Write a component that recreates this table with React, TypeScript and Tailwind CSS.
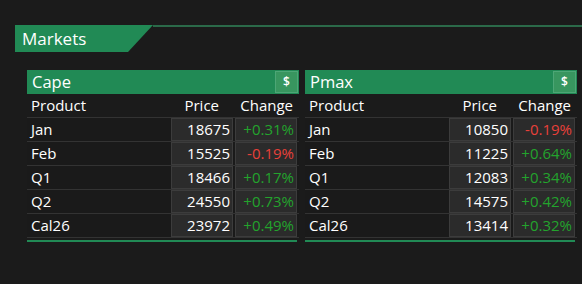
import React from "react";

type Row = { p: string; price: string; ch: string };

const cape: Row[] = [
  { p: "Jan", price: "18675", ch: "+0.31%" },
  { p: "Feb", price: "15525", ch: "-0.19%" },
  { p: "Q1", price: "18466", ch: "+0.17%" },
  { p: "Q2", price: "24550", ch: "+0.73%" },
  { p: "Cal26", price: "23972", ch: "+0.49%" },
];
const pmax: Row[] = [
  { p: "Jan", price: "10850", ch: "-0.19%" },
  { p: "Feb", price: "11225", ch: "+0.64%" },
  { p: "Q1", price: "12083", ch: "+0.34%" },
  { p: "Q2", price: "14575", ch: "+0.42%" },
  { p: "Cal26", price: "13414", ch: "+0.32%" },
];

function Panel({ title, rows }: { title: string; rows: Row[] }) {
  return (
    <div className="w-[272px] flex flex-col">
      <div className="h-[24px] bg-[#218a55] flex items-center justify-between pl-[5px] pr-[1px]">
        <span className="text-[16.5px] text-white leading-none font-medium">{title}</span>
        <div className="w-[23px] h-[22px] bg-[#38965f] border border-[#4da676] flex items-center justify-center text-[12px] text-white font-semibold leading-none">
          $
        </div>
      </div>
      <div className="h-[24px] flex items-center border-b border-[#333333] text-[15px] text-white font-medium">
        <div className="flex-1 pl-[4px]">Product</div>
        <div className="w-[62px] text-right pr-[14px]">Price</div>
        <div className="w-[62px] ml-[2px] mr-[2px] text-right pr-[4px]">Change</div>
      </div>
      {rows.map((r) => (
        <div key={r.p} className="h-[24px] flex items-stretch border-b border-[#333333] text-[15px] bg-[#1a1a1a] font-medium">
          <div className="flex-1 pl-[4px] flex items-center text-white">{r.p}</div>
          <div className="w-[62px] bg-[#2b2b2b] border border-[#3c3c3c] flex items-center justify-end pr-[2px] text-white">
            {r.price}
          </div>
          <div
            className={
              "w-[62px] ml-[2px] mr-[2px] bg-[#2b2b2b] border border-[#3c3c3c] flex items-center justify-end pr-[2px] font-normal " +
              (r.ch.startsWith("-") ? "text-[#e8403a]" : "text-[#23a32d]")
            }
          >
            {r.ch}
          </div>
        </div>
      ))}
      <div className="mt-[2px] mr-[2px] h-[2px] bg-[#218a55]" />
    </div>
  );
}

export default function App() {
  return (
    <div
      className="w-[582px] h-[284px] bg-[#1b1b1b] pt-[25px] overflow-hidden"
      style={{ fontFamily: '"Open Sans", sans-serif' }}
    >
      <div className="flex ml-[15px] items-start">
        <div
          className="w-[138px] h-[27px] bg-[#218a55] pl-[7px] flex items-center text-[17px] text-white leading-none font-medium"
          style={{ clipPath: "polygon(0 0, 100% 0, calc(100% - 25px) 100%, 0 100%)" }}
        >
          Markets
        </div>
        <div className="flex-1 h-[1.5px] bg-[#2b6a49]" />
      </div>
      <div className="flex gap-[6px] ml-[27px] mt-[18px]">
        <Panel title="Cape" rows={cape} />
        <Panel title="Pmax" rows={pmax} />
      </div>
    </div>
  );
}
